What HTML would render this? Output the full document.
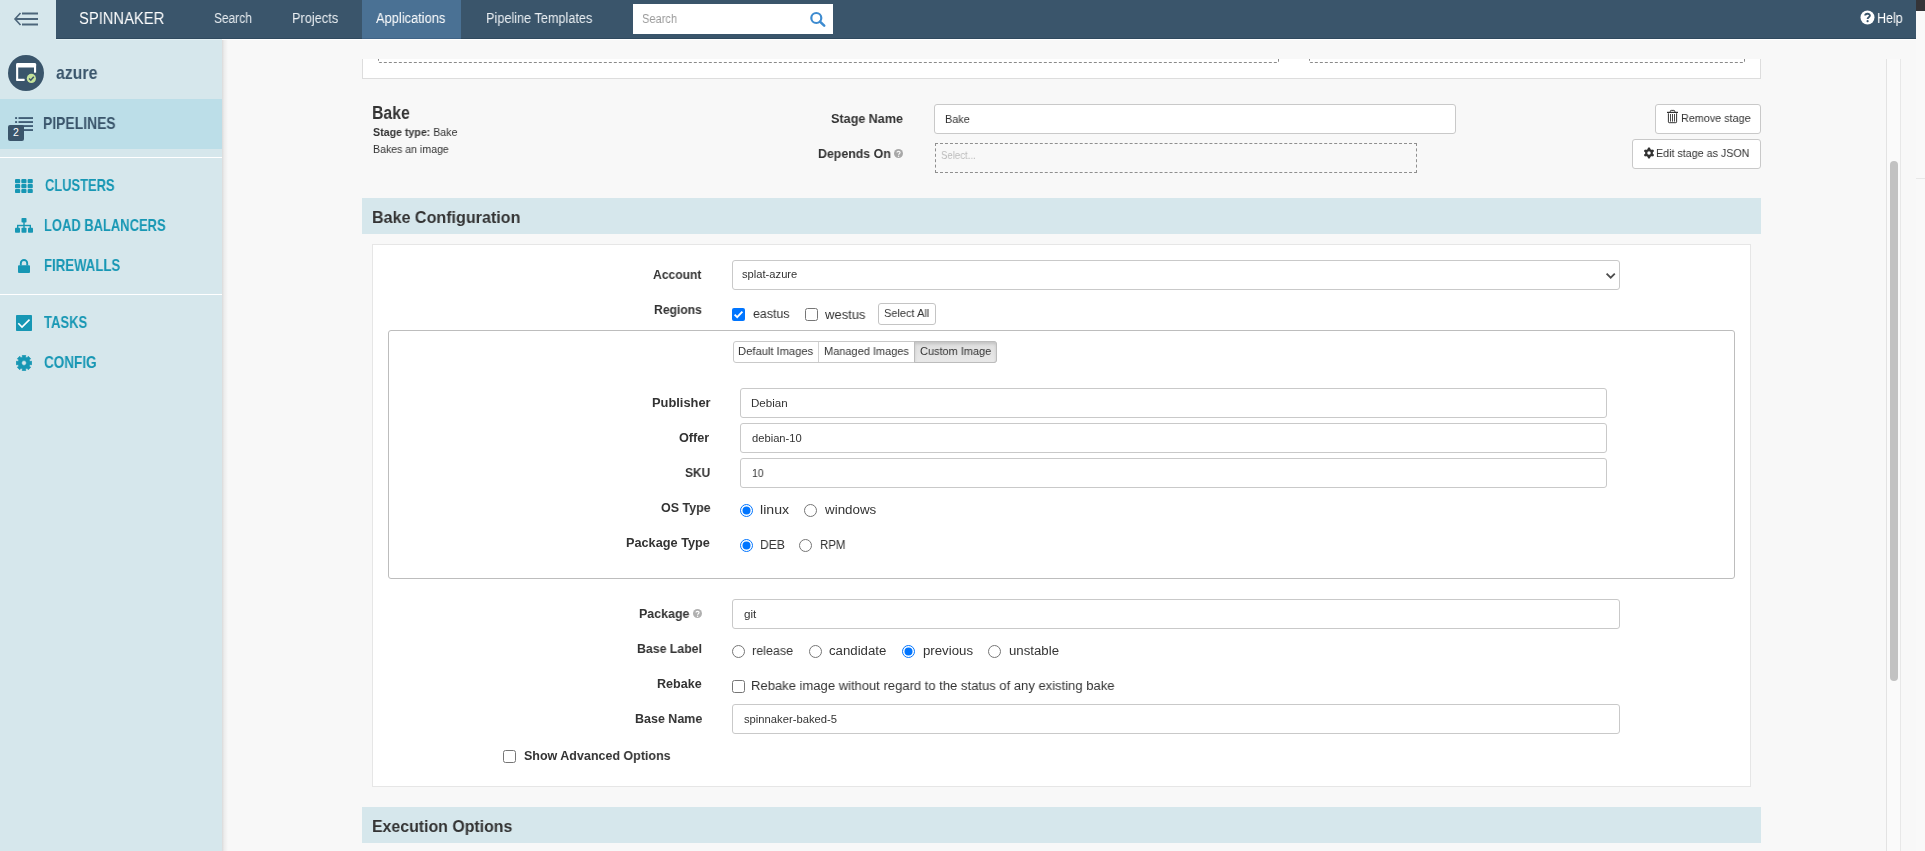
<!DOCTYPE html>
<html><head><meta charset="utf-8">
<style>
html,body{margin:0;padding:0;width:1925px;height:851px;overflow:hidden;background:#f8f8f8;}
body{position:relative;font-family:"Liberation Sans", sans-serif;}
*{box-sizing:border-box;}
.t{position:absolute;white-space:nowrap;line-height:1;transform-origin:0 0;will-change:transform;}
.t b{font-weight:700;}
</style></head><body>
<div style="position:absolute;left:0px;top:0px;width:1925px;height:851px;background:#f8f8f8"></div>
<div style="position:absolute;left:1916px;top:0px;width:9px;height:851px;background:#f9f9f9"></div>
<div style="position:absolute;left:1916px;top:0px;width:9px;height:11px;background:#343438"></div>
<div style="position:absolute;left:1916px;top:178px;width:9px;height:1px;background:#e8e8e8"></div>
<div style="position:absolute;left:0px;top:0px;width:222px;height:851px;background:#d6e7ec"></div>
<div style="position:absolute;left:222px;top:40px;width:6px;height:811px;background:linear-gradient(to right, rgba(0,0,0,0.12), rgba(0,0,0,0.05) 35%, rgba(0,0,0,0))"></div>
<div style="position:absolute;left:56px;top:0px;width:1860px;height:38px;background:#3a556b"></div>
<div style="position:absolute;left:56px;top:38px;width:1860px;height:1px;background:#2f495e"></div>
<div style="position:absolute;left:0px;top:39px;width:1916px;height:1px;background:#ffffff"></div>
<div style="position:absolute;left:0px;top:39px;width:56px;height:1px;background:#d6e7ec"></div>
<div style="position:absolute;left:56px;top:39px;width:166px;height:1px;background:#e1eff3"></div>
<div style="position:absolute;left:362px;top:0px;width:99px;height:38px;background:#4a7194"></div>
<div style="position:absolute;left:362px;top:38px;width:99px;height:1px;background:#3f6386"></div>
<svg style="position:absolute;left:0;top:0" width="56" height="39">
<g stroke="#4d667b" stroke-width="2" fill="none" stroke-linecap="butt">
<line x1="22" y1="13.5" x2="38" y2="13.5"/><line x1="15" y1="19" x2="38" y2="19"/><line x1="22" y1="24.5" x2="38" y2="24.5"/>
<polyline points="20.5,13 15,19 20.5,25" stroke-width="1.6"/>
</g></svg>
<div id="h_spin" class="t" style="left:78.90px;top:10.29px;font-size:16.42px;font-weight:400;color:#ffffff;transform:scaleX(0.8993);">SPINNAKER</div>
<div id="h_search" class="t" style="left:213.90px;top:11.59px;font-size:13.95px;font-weight:400;color:#e9eef2;transform:scaleX(0.8549);">Search</div>
<div id="h_proj" class="t" style="left:291.60px;top:11.59px;font-size:13.95px;font-weight:400;color:#e9eef2;transform:scaleX(0.9156);">Projects</div>
<div id="h_apps" class="t" style="left:376.40px;top:11.59px;font-size:13.95px;font-weight:400;color:#ffffff;transform:scaleX(0.9218);">Applications</div>
<div id="h_pt" class="t" style="left:485.60px;top:11.59px;font-size:13.95px;font-weight:400;color:#e9eef2;transform:scaleX(0.9105);">Pipeline Templates</div>
<div style="position:absolute;left:633px;top:4px;width:200px;height:30px;background:#fff"></div>
<div id="h_sph" class="t" style="left:642.00px;top:12.66px;font-size:12.21px;font-weight:400;color:#999999;transform:scaleX(0.9044);">Search</div>
<svg style="position:absolute;left:809px;top:11px" width="18" height="17" viewBox="0 0 18 17">
<circle cx="7.3" cy="7" r="5" stroke="#3d8bd0" stroke-width="2.2" fill="none"/>
<line x1="11" y1="10.6" x2="15.2" y2="14.6" stroke="#3d8bd0" stroke-width="2.6" stroke-linecap="round"/></svg>
<svg style="position:absolute;left:1860px;top:10px" width="15" height="15" viewBox="0 0 15 15">
<circle cx="7.5" cy="7.5" r="7" fill="#fff"/>
<path d="M5.2 5.6 C5.2 3.2 9.9 3.0 9.9 5.6 C9.9 7.3 7.6 7.2 7.6 8.9" stroke="#3a556b" stroke-width="1.9" fill="none"/>
<circle cx="7.6" cy="11.2" r="1.1" fill="#3a556b"/></svg>
<div id="h_help" class="t" style="left:1877.40px;top:10.94px;font-size:14.24px;font-weight:400;color:#ffffff;transform:scaleX(0.8770);">Help</div>
<svg style="position:absolute;left:8px;top:55px" width="36" height="36" viewBox="0 0 36 36">
<circle cx="18" cy="18" r="18" fill="#3a556b"/>
<g fill="#fff">
<rect x="8.1" y="7.9" width="20" height="4.6" rx="1.4"/>
<rect x="8.1" y="10" width="2.1" height="14.6"/>
<rect x="8.1" y="23.8" width="8.6" height="2.1" rx="0.6"/>
<rect x="26" y="10" width="2.1" height="7.7"/>
</g>
<circle cx="23.4" cy="23.4" r="4.6" fill="#c4e29b"/>
<polyline points="21.1,23.5 22.8,25.2 25.8,21.8" stroke="#3a556b" stroke-width="1.5" fill="none"/>
</svg>
<div id="s_azure" class="t" style="left:56.40px;top:65.09px;font-size:17.61px;font-weight:700;color:#3a556b;transform:scaleX(0.9004);">azure</div>
<div style="position:absolute;left:0px;top:99px;width:222px;height:50px;background:#bcdee8"></div>
<div style="position:absolute;left:0px;top:157px;width:222px;height:1px;background:#ffffff"></div>
<div style="position:absolute;left:0px;top:294px;width:222px;height:1px;background:#ffffff"></div>
<svg style="position:absolute;left:8px;top:116px" width="26" height="26" viewBox="0 0 26 26">
<g fill="#34506a">
<rect x="7.1" y="1.2" width="2" height="1.7"/><rect x="10.5" y="1.2" width="14.5" height="1.7"/>
<rect x="7.1" y="5.2" width="2" height="1.7"/><rect x="10.5" y="5.2" width="14.5" height="1.7"/>
<rect x="10.5" y="9.2" width="14.5" height="1.7"/>
<rect x="10.5" y="13.2" width="14.5" height="1.7"/>
</g>
<rect x="0" y="9" width="16" height="16" rx="2" fill="#3a556b"/>
<text x="8" y="20.1" font-family="Liberation Sans" font-size="10.5" fill="#fff" text-anchor="middle" font-weight="400">2</text>
</svg>
<div id="s_pipe" class="t" style="left:43.40px;top:116.46px;font-size:15.99px;font-weight:700;color:#3a556b;transform:scaleX(0.8697);">PIPELINES</div>
<svg style="position:absolute;left:15px;top:178.5px" width="18" height="14.5" viewBox="0 0 18 14.5">
<g fill="#1797b4"><rect x="0.0" y="0.00" width="5.2" height="4.2" rx="1"/><rect x="6.3" y="0.00" width="5.2" height="4.2" rx="1"/><rect x="12.6" y="0.00" width="5.2" height="4.2" rx="1"/><rect x="0.0" y="4.95" width="5.2" height="4.2" rx="1"/><rect x="6.3" y="4.95" width="5.2" height="4.2" rx="1"/><rect x="12.6" y="4.95" width="5.2" height="4.2" rx="1"/><rect x="0.0" y="9.90" width="5.2" height="4.2" rx="1"/><rect x="6.3" y="9.90" width="5.2" height="4.2" rx="1"/><rect x="12.6" y="9.90" width="5.2" height="4.2" rx="1"/></g></svg>
<div id="s_clu" class="t" style="left:44.70px;top:178.46px;font-size:15.99px;font-weight:700;color:#1797b4;transform:scaleX(0.8071);">CLUSTERS</div>
<svg style="position:absolute;left:15px;top:218px" width="18" height="15" viewBox="0 0 18 15">
<g fill="#1797b4">
<rect x="6.5" y="0" width="5" height="4.5" rx="0.8"/>
<rect x="8.3" y="4" width="1.4" height="3.5"/>
<rect x="2" y="6.8" width="14" height="1.4"/>
<rect x="2" y="7" width="1.4" height="3"/><rect x="8.3" y="7" width="1.4" height="3"/><rect x="14.6" y="7" width="1.4" height="3"/>
<rect x="0" y="9.8" width="5" height="5" rx="0.8"/><rect x="6.5" y="9.8" width="5" height="5" rx="0.8"/><rect x="13" y="9.8" width="5" height="5" rx="0.8"/>
</g></svg>
<div id="s_lb" class="t" style="left:43.70px;top:218.46px;font-size:15.99px;font-weight:700;color:#1797b4;transform:scaleX(0.8103);">LOAD BALANCERS</div>
<svg style="position:absolute;left:18px;top:259px" width="12" height="14" viewBox="0 0 12 14">
<path d="M2.8 6.5 V4.2 A3.2 3.2 0 0 1 9.2 4.2 V6.5" stroke="#1797b4" stroke-width="1.9" fill="none"/>
<rect x="0" y="6.2" width="12" height="7.8" rx="1" fill="#1797b4"/></svg>
<div id="s_fw" class="t" style="left:43.70px;top:258.26px;font-size:15.99px;font-weight:700;color:#1797b4;transform:scaleX(0.8251);">FIREWALLS</div>
<svg style="position:absolute;left:16px;top:315px" width="16" height="16" viewBox="0 0 16 16">
<rect x="0" y="0" width="16" height="16" rx="0.8" fill="#1797b4"/>
<polyline points="2.3,8.3 6,12 13.5,4.6" stroke="#fff" stroke-width="1.6" fill="none"/></svg>
<div id="s_tasks" class="t" style="left:44.20px;top:314.61px;font-size:15.70px;font-weight:700;color:#1797b4;transform:scaleX(0.8311);">TASKS</div>
<svg style="position:absolute;left:16px;top:355px" width="16" height="16" viewBox="0 0 16 16"><path d="M13.77 6.34 L15.81 6.29 L15.81 9.71 L13.77 9.66 L13.25 10.90 L14.74 12.31 L12.31 14.74 L10.90 13.25 L9.66 13.77 L9.71 15.81 L6.29 15.81 L6.34 13.77 L5.10 13.25 L3.69 14.74 L1.26 12.31 L2.75 10.90 L2.23 9.66 L0.19 9.71 L0.19 6.29 L2.23 6.34 L2.75 5.10 L1.26 3.69 L3.69 1.26 L5.10 2.75 L6.34 2.23 L6.29 0.19 L9.71 0.19 L9.66 2.23 L10.90 2.75 L12.31 1.26 L14.74 3.69 L13.25 5.10 Z M10.40 8.00 A2.4 2.4 0 1 0 5.60 8.00 A2.4 2.4 0 1 0 10.40 8.00 Z" fill="#1797b4" fill-rule="evenodd" stroke="#1797b4" stroke-width="0.6" stroke-linejoin="round"/></svg>
<div id="s_cfg" class="t" style="left:44.20px;top:354.51px;font-size:15.70px;font-weight:700;color:#1797b4;transform:scaleX(0.8622);">CONFIG</div>
<div style="position:absolute;left:362px;top:59px;width:1399px;height:20px;background:#fff;border-left:1px solid #ddd;border-right:1px solid #ddd;border-bottom:1px solid #ddd"></div>
<div style="position:absolute;left:378px;top:50px;width:901px;height:13px;border:1px dashed #8a8a8a;border-top:none;border-radius:0 0 2px 2px"></div>
<div style="position:absolute;left:1309px;top:50px;width:436px;height:13px;border:1px dashed #8a8a8a;border-top:none;border-radius:0 0 2px 2px"></div>
<div style="position:absolute;left:362px;top:40px;width:1400px;height:19px;background:#f8f8f8"></div>
<div id="m_bake" class="t" style="left:372.10px;top:105.23px;font-size:17.44px;font-weight:700;color:#333;transform:scaleX(0.9076);">Bake</div>
<div id="m_stype" class="t" style="left:372.50px;top:126.59px;font-size:10.76px;font-weight:400;color:#333;transform:scaleX(0.9886);"><b>Stage type:</b> Bake</div>
<div id="m_bakes" class="t" style="left:372.50px;top:143.89px;font-size:10.76px;font-weight:400;color:#333;transform:scaleX(0.9824);">Bakes an image</div>
<div id="l_sname" class="t" style="left:831.00px;top:113.17px;font-size:12.79px;font-weight:700;color:#333;transform:scaleX(0.9839);">Stage Name</div>
<div style="position:absolute;left:934px;top:104px;width:522px;height:30px;background:#fff;border:1px solid #c9c9c9;border-radius:3px;box-sizing:border-box"></div>
<div id="v_sname" class="t" style="left:944.50px;top:114.40px;font-size:11.34px;font-weight:400;color:#333;transform:scaleX(0.9617);">Bake</div>
<div id="l_dep" class="t" style="left:818.10px;top:148.07px;font-size:12.79px;font-weight:700;color:#333;transform:scaleX(0.9671);">Depends On</div>
<svg style="position:absolute;left:894px;top:148.5px" width="9" height="9" viewBox="0 0 9 9">
<circle cx="4.5" cy="4.5" r="4.5" fill="#a8a8a8"/>
<path d="M3 3.6 C3 1.9 6.1 1.9 6.1 3.6 C6.1 4.7 4.6 4.6 4.6 5.7" stroke="#f8f8f8" stroke-width="1.2" fill="none"/>
<circle cx="4.6" cy="7.2" r="0.7" fill="#f8f8f8"/></svg>
<div style="position:absolute;left:935px;top:143px;width:482px;height:30px;border:1px dashed #8f8f8f;box-sizing:border-box"></div>
<div id="v_dep" class="t" style="left:941.30px;top:150.30px;font-size:11.34px;font-weight:400;color:#bbbbbb;transform:scaleX(0.8484);">Select...</div>
<div style="position:absolute;left:1655px;top:104px;width:106px;height:30px;background:#fff;border:1px solid #c9c9c9;border-radius:3px;box-sizing:border-box"></div>
<svg style="position:absolute;left:1666px;top:109px" width="14" height="15" viewBox="0 0 14 15">
<g stroke="#333" fill="none">
<line x1="1" y1="3.4" x2="12" y2="3.4" stroke-width="1.2"/>
<path d="M4.3 3.2 V2.3 Q4.3 1.4 5.2 1.4 H7.9 Q8.8 1.4 8.8 2.3 V3.2" stroke-width="1"/>
<path d="M2.4 4.3 V12.9 Q2.4 13.7 3.2 13.7 H9.8 Q10.6 13.7 10.6 12.9 V4.3" stroke-width="1"/>
<line x1="4.5" y1="5" x2="4.5" y2="12.6" stroke-width="0.9"/><line x1="6.5" y1="5" x2="6.5" y2="12.6" stroke-width="0.9"/><line x1="8.5" y1="5" x2="8.5" y2="12.6" stroke-width="0.9"/>
</g></svg>
<div id="b_rm" class="t" style="left:1680.60px;top:112.15px;font-size:11.63px;font-weight:400;color:#333;transform:scaleX(0.9291);">Remove stage</div>
<div style="position:absolute;left:1632px;top:139px;width:129px;height:30px;background:#fff;border:1px solid #c9c9c9;border-radius:3px;box-sizing:border-box"></div>
<svg style="position:absolute;left:1643px;top:146.5px" width="12" height="12" viewBox="0 0 12 12">
<g fill="#333" transform="translate(6,6)">
<circle r="3.9"/>
<rect x="-1.25" y="-5.4" width="2.5" height="10.8" rx="0.9"/>
<rect x="-1.25" y="-5.4" width="2.5" height="10.8" rx="0.9" transform="rotate(60)"/>
<rect x="-1.25" y="-5.4" width="2.5" height="10.8" rx="0.9" transform="rotate(120)"/>
</g><circle cx="6" cy="6" r="1.75" fill="#fff"/></svg>
<div id="b_json" class="t" style="left:1656.40px;top:147.15px;font-size:11.63px;font-weight:400;color:#333;transform:scaleX(0.9211);">Edit stage as JSON</div>
<div style="position:absolute;left:362px;top:198px;width:1399px;height:36px;background:#d6e7ec"></div>
<div id="sec_bake" class="t" style="left:371.80px;top:208.50px;font-size:17.01px;font-weight:700;color:#333;transform:scaleX(0.9462);">Bake Configuration</div>
<div style="position:absolute;left:372px;top:244px;width:1379px;height:543px;background:#fff;border:1px solid #e6e6e6;box-sizing:border-box"></div>
<div id="l_acct" class="t" style="left:653.00px;top:268.54px;font-size:12.35px;font-weight:700;color:#333;transform:scaleX(0.9800);">Account</div>
<div style="position:absolute;left:732px;top:260px;width:888px;height:30px;background:#fff;border:1px solid #c9c9c9;border-radius:3px;box-sizing:border-box"></div>
<div id="v_acct" class="t" style="left:742.20px;top:269.15px;font-size:11.05px;font-weight:400;color:#333;transform:scaleX(1.0116);">splat-azure</div>
<svg style="position:absolute;left:1605px;top:271.5px" width="11" height="8" viewBox="0 0 11 8">
<polyline points="1.6,1.6 5.7,5.7 9.8,1.6" stroke="#4d4d4d" stroke-width="1.8" fill="none"/></svg>
<div id="l_reg" class="t" style="left:653.70px;top:304.24px;font-size:12.35px;font-weight:700;color:#333;transform:scaleX(0.9839);">Regions</div>
<svg style="position:absolute;left:732px;top:308px" width="13" height="13" viewBox="0 0 13 13">
<rect x="0" y="0" width="13" height="13" rx="2" fill="#0075ff"/>
<polyline points="2.6,6.6 5.2,9.2 10.4,3.6" stroke="#fff" stroke-width="1.9" fill="none"/></svg>
<div id="v_east" class="t" style="left:752.60px;top:307.30px;font-size:13.23px;font-weight:400;color:#333;transform:scaleX(0.9393);">eastus</div>
<svg style="position:absolute;left:805px;top:308px" width="13" height="13" viewBox="0 0 13 13">
<rect x="0.5" y="0.5" width="12" height="12" rx="2" fill="#fff" stroke="#767676" stroke-width="1"/></svg>
<div id="v_west" class="t" style="left:825.00px;top:308.40px;font-size:13.23px;font-weight:400;color:#333;transform:scaleX(0.9836);">westus</div>
<div style="position:absolute;left:878px;top:303px;width:58px;height:22px;background:#fff;border:1px solid #c4c4c4;border-radius:3px;box-sizing:border-box"></div>
<div id="b_sa" class="t" style="left:884.40px;top:307.25px;font-size:11.63px;font-weight:400;color:#333;transform:scaleX(0.9453);">Select All</div>
<div style="position:absolute;left:388px;top:330px;width:1347px;height:249px;border:1px solid #bdbdbd;border-radius:3px;box-sizing:border-box"></div>
<div style="position:absolute;left:733px;top:341px;width:264px;height:22px;background:#fff;border:1px solid #c9c9c9;border-radius:3px;box-sizing:border-box"></div>
<div style="position:absolute;left:818px;top:342px;width:1px;height:20px;background:#d2d2d2"></div>
<div style="position:absolute;left:914px;top:341px;width:83px;height:22px;background:linear-gradient(#dedede,#e8e8e8);border:1px solid #bcbcbc;border-radius:0 3px 3px 0;box-sizing:border-box;box-shadow:inset 0 2px 3px rgba(0,0,0,0.12)"></div>
<div id="b_def" class="t" style="left:738.30px;top:345.90px;font-size:11.34px;font-weight:400;color:#333;transform:scaleX(0.9870);">Default Images</div>
<div id="b_man" class="t" style="left:824.10px;top:345.90px;font-size:11.34px;font-weight:400;color:#333;transform:scaleX(0.9704);">Managed Images</div>
<div id="b_cus" class="t" style="left:920.00px;top:345.90px;font-size:11.34px;font-weight:400;color:#333;transform:scaleX(0.9678);">Custom Image</div>
<div id="l_pub" class="t" style="left:652.10px;top:397.42px;font-size:12.50px;font-weight:700;color:#333;transform:scaleX(1.0290);">Publisher</div>
<div style="position:absolute;left:740px;top:388px;width:867px;height:30px;background:#fff;border:1px solid #c9c9c9;border-radius:3px;box-sizing:border-box"></div>
<div id="v_pub" class="t" style="left:751.10px;top:397.65px;font-size:11.05px;font-weight:400;color:#333;transform:scaleX(1.0492);">Debian</div>
<div id="l_off" class="t" style="left:678.90px;top:432.12px;font-size:12.50px;font-weight:700;color:#333;transform:scaleX(1.0146);">Offer</div>
<div style="position:absolute;left:740px;top:423px;width:867px;height:30px;background:#fff;border:1px solid #c9c9c9;border-radius:3px;box-sizing:border-box"></div>
<div id="v_off" class="t" style="left:752.10px;top:432.65px;font-size:11.05px;font-weight:400;color:#333;transform:scaleX(1.0126);">debian-10</div>
<div id="l_sku" class="t" style="left:685.00px;top:467.12px;font-size:12.50px;font-weight:700;color:#333;transform:scaleX(0.9615);">SKU</div>
<div style="position:absolute;left:740px;top:458px;width:867px;height:30px;background:#fff;border:1px solid #c9c9c9;border-radius:3px;box-sizing:border-box"></div>
<div id="v_sku" class="t" style="left:752.00px;top:467.65px;font-size:11.05px;font-weight:400;color:#333;transform:scaleX(0.9349);">10</div>
<div id="l_os" class="t" style="left:660.80px;top:502.42px;font-size:12.50px;font-weight:700;color:#333;transform:scaleX(0.9966);">OS Type</div>
<svg style="position:absolute;left:740px;top:504px" width="13" height="13" viewBox="0 0 13 13">
<circle cx="6.5" cy="6.5" r="6" fill="#fff" stroke="#0075ff" stroke-width="1"/><circle cx="6.5" cy="6.5" r="4" fill="#0075ff"/></svg>
<div id="v_linux" class="t" style="left:759.60px;top:502.80px;font-size:13.23px;font-weight:400;color:#333;transform:scaleX(1.0689);">linux</div>
<svg style="position:absolute;left:804px;top:504px" width="13" height="13" viewBox="0 0 13 13">
<circle cx="6.5" cy="6.5" r="6" fill="#fff" stroke="#767676" stroke-width="1"/></svg>
<div id="v_win" class="t" style="left:824.60px;top:502.80px;font-size:13.23px;font-weight:400;color:#333;transform:scaleX(1.0122);">windows</div>
<div id="l_pt" class="t" style="left:626.40px;top:537.32px;font-size:12.50px;font-weight:700;color:#333;transform:scaleX(1.0172);">Package Type</div>
<svg style="position:absolute;left:740px;top:539px" width="13" height="13" viewBox="0 0 13 13">
<circle cx="6.5" cy="6.5" r="6" fill="#fff" stroke="#0075ff" stroke-width="1"/><circle cx="6.5" cy="6.5" r="4" fill="#0075ff"/></svg>
<div id="v_deb" class="t" style="left:759.60px;top:537.80px;font-size:13.23px;font-weight:400;color:#333;transform:scaleX(0.9194);">DEB</div>
<svg style="position:absolute;left:799px;top:539px" width="13" height="13" viewBox="0 0 13 13">
<circle cx="6.5" cy="6.5" r="6" fill="#fff" stroke="#767676" stroke-width="1"/></svg>
<div id="v_rpm" class="t" style="left:819.80px;top:537.80px;font-size:13.23px;font-weight:400;color:#333;transform:scaleX(0.8694);">RPM</div>
<div id="l_pkg" class="t" style="left:638.70px;top:607.62px;font-size:12.50px;font-weight:700;color:#333;transform:scaleX(0.9926);">Package</div>
<svg style="position:absolute;left:693px;top:608.5px" width="9" height="9" viewBox="0 0 9 9">
<circle cx="4.5" cy="4.5" r="4.5" fill="#b0b0b0"/>
<path d="M3 3.6 C3 1.9 6.1 1.9 6.1 3.6 C6.1 4.7 4.6 4.6 4.6 5.7" stroke="#fff" stroke-width="1.2" fill="none"/>
<circle cx="4.6" cy="7.2" r="0.7" fill="#fff"/></svg>
<div style="position:absolute;left:732px;top:599px;width:888px;height:30px;background:#fff;border:1px solid #c9c9c9;border-radius:3px;box-sizing:border-box"></div>
<div id="v_pkg" class="t" style="left:743.60px;top:608.85px;font-size:11.05px;font-weight:400;color:#333;transform:scaleX(1.0556);">git</div>
<div id="l_bl" class="t" style="left:637.00px;top:643.42px;font-size:12.50px;font-weight:700;color:#333;transform:scaleX(0.9848);">Base Label</div>
<svg style="position:absolute;left:732px;top:645px" width="13" height="13" viewBox="0 0 13 13">
<circle cx="6.5" cy="6.5" r="6" fill="#fff" stroke="#767676" stroke-width="1"/></svg>
<div id="v_rel" class="t" style="left:752.20px;top:643.80px;font-size:13.23px;font-weight:400;color:#333;transform:scaleX(0.9483);">release</div>
<svg style="position:absolute;left:809px;top:645px" width="13" height="13" viewBox="0 0 13 13">
<circle cx="6.5" cy="6.5" r="6" fill="#fff" stroke="#767676" stroke-width="1"/></svg>
<div id="v_cand" class="t" style="left:829.00px;top:643.80px;font-size:13.23px;font-weight:400;color:#333;">candidate</div>
<svg style="position:absolute;left:902px;top:645px" width="13" height="13" viewBox="0 0 13 13">
<circle cx="6.5" cy="6.5" r="6" fill="#fff" stroke="#0075ff" stroke-width="1"/><circle cx="6.5" cy="6.5" r="4" fill="#0075ff"/></svg>
<div id="v_prev" class="t" style="left:922.80px;top:643.80px;font-size:13.23px;font-weight:400;color:#333;transform:scaleX(1.0008);">previous</div>
<svg style="position:absolute;left:988px;top:645px" width="13" height="13" viewBox="0 0 13 13">
<circle cx="6.5" cy="6.5" r="6" fill="#fff" stroke="#767676" stroke-width="1"/></svg>
<div id="v_unst" class="t" style="left:1008.60px;top:643.80px;font-size:13.23px;font-weight:400;color:#333;transform:scaleX(0.9986);">unstable</div>
<div id="l_reb" class="t" style="left:657.20px;top:677.62px;font-size:12.50px;font-weight:700;color:#333;transform:scaleX(1.0052);">Rebake</div>
<svg style="position:absolute;left:732px;top:680px" width="13" height="13" viewBox="0 0 13 13">
<rect x="0.5" y="0.5" width="12" height="12" rx="2" fill="#fff" stroke="#767676" stroke-width="1"/></svg>
<div id="v_reb" class="t" style="left:751.20px;top:678.80px;font-size:13.23px;font-weight:400;color:#333;transform:scaleX(0.9853);">Rebake image without regard to the status of any existing bake</div>
<div id="l_bn" class="t" style="left:634.80px;top:712.92px;font-size:12.50px;font-weight:700;color:#333;transform:scaleX(0.9974);">Base Name</div>
<div style="position:absolute;left:732px;top:704px;width:888px;height:30px;background:#fff;border:1px solid #c9c9c9;border-radius:3px;box-sizing:border-box"></div>
<div id="v_bn" class="t" style="left:743.60px;top:714.15px;font-size:11.05px;font-weight:400;color:#333;transform:scaleX(1.0175);">spinnaker-baked-5</div>
<svg style="position:absolute;left:503px;top:750px" width="13" height="13" viewBox="0 0 13 13">
<rect x="0.5" y="0.5" width="12" height="12" rx="2" fill="#fff" stroke="#767676" stroke-width="1"/></svg>
<div id="l_adv" class="t" style="left:523.50px;top:750.12px;font-size:12.50px;font-weight:700;color:#333;transform:scaleX(0.9987);">Show Advanced Options</div>
<div style="position:absolute;left:362px;top:807px;width:1399px;height:36px;background:#d6e7ec"></div>
<div id="sec_exec" class="t" style="left:371.80px;top:818.40px;font-size:17.01px;font-weight:700;color:#333;transform:scaleX(0.9343);">Execution Options</div>
<div style="position:absolute;left:1886px;top:59px;width:1px;height:792px;background:#e3e3e3"></div>
<div style="position:absolute;left:1900px;top:59px;width:1px;height:792px;background:#e8e8e8"></div>
<div style="position:absolute;left:1887px;top:59px;width:13px;height:792px;background:#fafafa"></div>
<div style="position:absolute;left:1890px;top:161px;width:8px;height:520px;background:#c2c2c2;border-radius:4px"></div>
</body></html>
